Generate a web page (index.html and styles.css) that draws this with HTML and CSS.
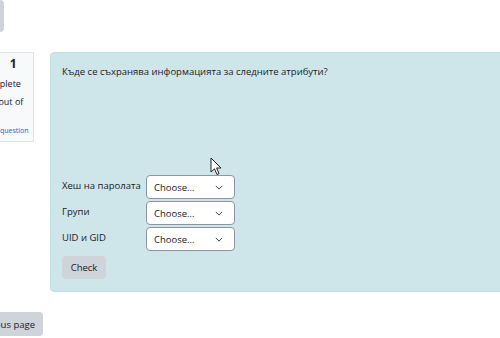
FILE: index.html
```html
<!DOCTYPE html>
<html lang="bg">
<head>
    <meta charset="UTF-8">
    <meta name="viewport" content="width=device-width, initial-scale=1.0">
    <title>Тест</title>
    <link rel="stylesheet" href="styles.css">
</head>
<body>
    <div class="topbar">
        <button class="btn btn-top">Back</button>
    </div>

    <div class="main">
        <div class="info">
            <h3 class="qno-title">Question <span class="qno">1</span></h3>
            <div class="state">Not complete</div>
            <div class="grade">Marked out of 1.00</div>
            <a href="#" class="flag">
                <svg class="flag-icon" width="11" height="11" viewBox="0 0 11 11">
                    <path d="M2 1v10M2 1.5h7l-2 2.5 2 2.5H2" fill="none" stroke="#0f6cbf" stroke-width="1"/>
                </svg>Flag question
            </a>
        </div>

        <div class="content">
            <form class="formulation">
                <p class="qtext">Къде се съхранява информацията за следните атрибути?</p>
                <div class="qspace"></div>

                <div class="row">
                    <label for="sub0">Хеш на паролата</label>
                    <select id="sub0" class="custom-select">
                        <option>Choose...</option>
                    </select>
                </div>
                <div class="row">
                    <label for="sub1">Групи</label>
                    <select id="sub1" class="custom-select">
                        <option>Choose...</option>
                    </select>
                </div>
                <div class="row">
                    <label for="sub2">UID и GID</label>
                    <select id="sub2" class="custom-select">
                        <option>Choose...</option>
                    </select>
                </div>

                <button type="button" class="btn btn-check">Check</button>
            </form>
        </div>
    </div>

    <div class="nav">
        <button class="btn btn-prev">Previous page</button>
    </div>

    <svg class="cursor" width="13" height="20" viewBox="0 0 13 20">
        <path d="M1 1 L1 15 L4.5 11.8 L7 17.5 L9 16.6 L6.6 11 L11 11 Z" fill="#fff" stroke="#222" stroke-width="1"/>
    </svg>
</body>
</html>
```

FILE: styles.css
```css
body {
    margin: 0;
    font-family: "Open Sans", "Noto Sans", sans-serif;
    font-size: 9.5px;
    color: #1d2125;
    background-color: #fff;
    overflow: hidden;
}

.btn {
    font-family: inherit;
    font-size: 9.5px;
    color: #1d2125;
    background-color: #ced4da;
    border: none;
    border-radius: 4px;
    cursor: pointer;
}

.topbar {
    height: 32px;
}

.btn-top {
    display: block;
    width: 60px;
    height: 32px;
    margin-left: -56px;
    color: transparent;
}

.main {
    display: flex;
    align-items: flex-start;
    margin-top: 20px;
}

/* question info box, partly scrolled out on the left */
.info {
    flex: none;
    width: 67px;
    margin-left: -43px;
    padding: 4px 2px 4px 6px;
    font-size: 9px;
    line-height: 12px;
    background-color: #f8f9fa;
    border: 1px solid #dee2e6;
}

.qno-title {
    margin: 0;
    font-size: 9px;
    font-weight: normal;
    line-height: 14px;
    text-indent: -4px;
    white-space: nowrap;
}

.qno {
    margin-left: 9px;
    font-size: 12px;
    font-weight: bold;
}

.state,
.grade {
    margin-top: 6px;
}

.info .flag {
    display: block;
    margin-top: 4px;
    font-size: 7px;
    color: #0f6cbf;
    text-decoration: none;
    white-space: nowrap;
}

.flag-icon {
    vertical-align: -2px;
    margin-right: 10px;
}

.content {
    flex: none;
    width: 480px;
    margin-left: 16px;
}

.formulation {
    padding: 10px 11px 12px;
    background-color: #cee5e9;
    border: 1px solid #bcdde3;
    border-radius: 4px;
}

.qtext {
    margin: 0;
    line-height: 18px;
}

.qspace {
    height: 94px;
}

.row {
    display: flex;
    align-items: center;
    margin-bottom: 2px;
}

.row label {
    width: 84px;
    padding-bottom: 3px;
    white-space: nowrap;
}

.custom-select {
    appearance: none;
    width: 89px;
    height: 24px;
    padding: 0 20px 0 7px;
    font-family: inherit;
    font-size: 9.5px;
    color: #1d2125;
    background: #fff url("data:image/svg+xml,%3csvg xmlns='http://www.w3.org/2000/svg' viewBox='0 0 10 6'%3e%3cpath d='M1 1l4 4 4-4' fill='none' stroke='%23343a40' stroke-width='1.2'/%3e%3c/svg%3e") no-repeat right 11px center;
    background-size: 8px 5px;
    border: 1px solid #8f959e;
    border-radius: 4px;
}

.btn-check {
    display: block;
    margin-top: 5px;
    width: 44px;
    height: 23px;
    padding: 0;
}

.nav {
    margin-top: 20px;
}

.btn-prev {
    width: 90px;
    height: 24px;
    margin-left: -47px;
    padding: 0 8px 0 0;
    text-align: right;
}

.cursor {
    position: absolute;
    left: 210px;
    top: 157px;
}
```
